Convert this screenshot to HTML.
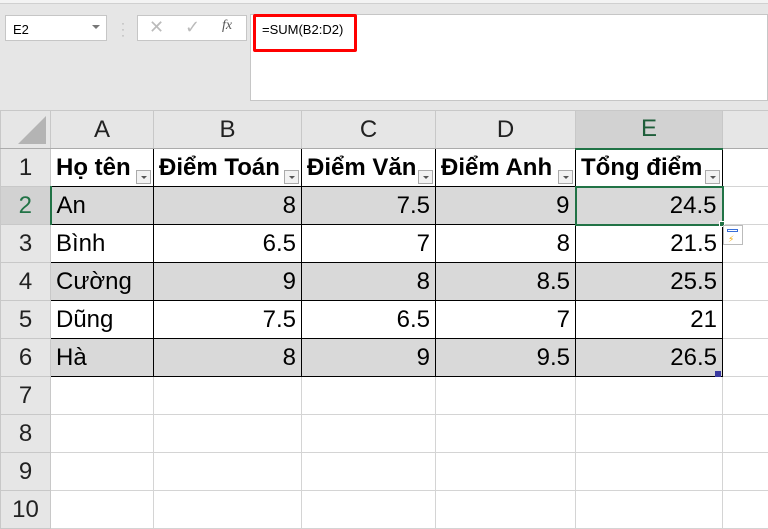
<!DOCTYPE html>
<html><head><meta charset="utf-8"><style>
*{margin:0;padding:0;box-sizing:border-box}
body{width:768px;height:517px;overflow:hidden;background:#e6e6e6;font-family:"Liberation Sans","DejaVu Sans",sans-serif;position:relative}
.abs{position:absolute}
table{position:absolute;left:0;top:110px;width:782px;border-collapse:collapse;table-layout:fixed}
td{height:38px;font-size:24px;padding:0 5px;white-space:nowrap;overflow:hidden;border:1px solid #d4d4d4;background:#fff;color:#000;position:relative}
td.rh{background:#e6e6e6;text-align:center;color:#222;border-color:#c8c8c8;padding:0}
tr.ch td{background:#e6e6e6;text-align:center;color:#222;border-color:#c8c8c8;border-bottom:1px solid #ababab}
tr.d td.c{border:1.5px solid #000}
.g td.c{background:#d9d9d9}
.n{text-align:right}
.h{font-weight:bold}
.dd{position:absolute;right:2px;bottom:2px;width:15px;height:14px;border:1px solid #aaa;background:#f2f2f2}
.dd:after{content:"";position:absolute;left:4px;top:5px;border-left:3px solid transparent;border-right:3px solid transparent;border-top:3px solid #555}
</style></head><body>
<div class="abs" style="left:0;top:0;width:768px;height:4px;background:#f3f3f3;border-bottom:1px solid #d0d0d0"></div>
<div class="abs" style="left:5px;top:15px;width:102px;height:26px;background:#fff;border:1px solid #c6c6c6;font-size:13px;padding:6px 0 0 7px">E2</div>
<div class="abs" style="left:92px;top:25px;border-left:4px solid transparent;border-right:4px solid transparent;border-top:4px solid #777"></div>
<div class="abs" style="left:121px;top:20px;color:#aaa;font-size:12px;line-height:6px">·<br>·<br>·</div>
<div class="abs" style="left:137px;top:15px;width:110px;height:26px;background:#fff;border:1px solid #c6c6c6"></div>
<div class="abs" style="left:149px;top:17px;color:#bbb;font-size:18px">✕</div>
<div class="abs" style="left:185px;top:17px;color:#bbb;font-size:18px">✓</div>
<div class="abs" style="left:222px;top:18px;color:#555;font-size:14px;font-style:italic;font-family:'Liberation Serif',serif">fx</div>
<div class="abs" style="left:250px;top:14px;width:518px;height:87px;background:#fff;border:1px solid #c6c6c6"></div>
<div class="abs" style="left:253px;top:14px;width:104px;height:38px;border:3px solid #f00;border-radius:2px"></div>
<div class="abs" style="left:262px;top:22px;font-size:13px">=SUM(B2:D2)</div>
<table>
<colgroup><col style="width:50px"><col style="width:103px"><col style="width:148px"><col style="width:134px"><col style="width:140px"><col style="width:147px"><col style="width:60px"></colgroup>
<tr class="ch"><td style="position:relative"><div style="position:absolute;right:4px;bottom:4px;border-left:28px solid transparent;border-bottom:28px solid #b4b4b4"></div></td><td>A</td><td>B</td><td>C</td><td>D</td><td style="background:#d2d2d2;border-bottom:2px solid #217346;color:#1e5e3a">E</td><td></td></tr>
<tr class="d"><td class="rh">1</td><td class="c h">Họ tên<span class="dd"></span></td><td class="c h">Điểm Toán<span class="dd"></span></td><td class="c h">Điểm Văn<span class="dd"></span></td><td class="c h">Điểm Anh<span class="dd"></span></td><td class="c h">Tổng điểm<span class="dd"></span></td><td></td></tr>
<tr class="d g"><td class="rh" style="background:#d2d2d2;color:#217346;border-right:2px solid #217346">2</td><td class="c">An</td><td class="c n">8</td><td class="c n">7.5</td><td class="c n">9</td><td class="c n" style="border:2px solid #217346">24.5</td><td></td></tr>
<tr class="d"><td class="rh">3</td><td class="c">Bình</td><td class="c n">6.5</td><td class="c n">7</td><td class="c n">8</td><td class="c n">21.5</td><td></td></tr>
<tr class="d g"><td class="rh">4</td><td class="c">Cường</td><td class="c n">9</td><td class="c n">8</td><td class="c n">8.5</td><td class="c n">25.5</td><td></td></tr>
<tr class="d"><td class="rh">5</td><td class="c">Dũng</td><td class="c n">7.5</td><td class="c n">6.5</td><td class="c n">7</td><td class="c n">21</td><td></td></tr>
<tr class="d g"><td class="rh">6</td><td class="c">Hà</td><td class="c n">8</td><td class="c n">9</td><td class="c n">9.5</td><td class="c n">26.5</td><td></td></tr>
<tr><td class="rh">7</td><td></td><td></td><td></td><td></td><td></td><td></td></tr>
<tr><td class="rh">8</td><td></td><td></td><td></td><td></td><td></td><td></td></tr>
<tr><td class="rh">9</td><td></td><td></td><td></td><td></td><td></td><td></td></tr>
<tr><td class="rh">10</td><td></td><td></td><td></td><td></td><td></td><td></td></tr>
</table>
<div class="abs" style="left:719px;top:221px;width:6px;height:6px;background:#217346;border:1px solid #fff"></div>
<div class="abs" style="left:723px;top:225px;width:20px;height:20px;background:#fff;border:1px solid #bbb"></div>
<div class="abs" style="left:727px;top:229px;width:11px;height:3px;border:1px solid #3a6fd8"></div>
<div class="abs" style="left:728px;top:234px;color:#f0a800;font-size:9px;font-weight:bold">⚡</div>
<div class="abs" style="left:715px;top:371px;width:6px;height:6px;background:#3a3aa0"></div>
</body></html>
